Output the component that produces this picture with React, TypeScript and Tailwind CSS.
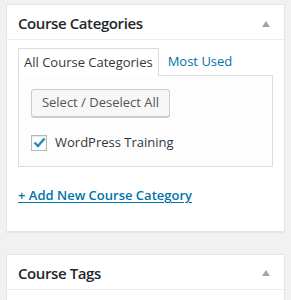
export default function App() {
    return (
        <div
            className="h-[300px] w-[291px] overflow-hidden bg-[#f1f1f1] px-[6px] pt-[4px]"
            style={{ fontFamily: '"Open Sans", sans-serif' }}
        >
            {/* Course Categories box */}
            <div className="border border-[#e5e5e5] bg-white shadow-[0_1px_1px_rgba(0,0,0,0.04)]">
                <div className="flex h-[35px] items-center justify-between border-b border-[#eeeeee] pl-[11px] pr-[14px] pt-[3px]">
                    <span className="text-[15px] font-semibold tracking-[-0.4px] text-[#23282d]">Course Categories</span>
                    <span className="h-0 w-0 border-x-[4px] border-b-[6px] border-x-transparent border-b-[#a0a5aa]" />
                </div>
                <div className="px-[11px] pt-[8px] pb-[25px]">
                    {/* Tabs */}
                    <div className="flex items-end">
                        <div className="relative -mb-px flex h-[28px] items-center border border-b-0 border-[#dddddd] bg-white px-[5px] text-[13px] text-[#32373c]">
                            All Course Categories
                        </div>
                        <span className="flex h-[27px] items-center px-[9px] text-[13px] text-[#0073aa]">Most Used</span>
                    </div>
                    <div className="h-[92px] border border-[#dddddd] bg-[#fdfdfd] pl-[12px] pt-[13px]">
                        <button className="flex h-[28px] w-[139px] items-center justify-center rounded-[3px] border border-[#cccccc] bg-[#f7f7f7] text-[13px] text-[#555555] shadow-[0_1px_0_#cccccc]">
                            Select / Deselect All
                        </button>
                        <label className="mt-[16px] flex items-center gap-[8px] text-[13px] text-[#32373c]">
                            <span className="flex h-[16px] w-[16px] items-center justify-center border border-[#b4b9be] bg-white shadow-[inset_0_1px_2px_rgba(0,0,0,0.1)]">
                                <svg width="13" height="11" viewBox="0 0 13 11">
                                    <path d="M1.5 5.5 L5 9 L11.5 1.5" fill="none" stroke="#1e8cbe" strokeWidth="2.4" />
                                </svg>
                            </span>
                            WordPress Training
                        </label>
                    </div>
                    <a className="mt-[19px] block text-[13px] font-semibold text-[#0073aa] underline underline-offset-2">
                        + Add New Course Category
                    </a>
                </div>
            </div>

            {/* Course Tags box */}
            <div className="mt-[22px] border border-[#e5e5e5] bg-white shadow-[0_1px_1px_rgba(0,0,0,0.04)]">
                <div className="flex h-[35px] items-center justify-between border-b border-[#eeeeee] pl-[11px] pr-[14px] pt-[3px]">
                    <span className="text-[15px] font-semibold tracking-[-0.4px] text-[#23282d]">Course Tags</span>
                    <span className="h-0 w-0 border-x-[4px] border-b-[6px] border-x-transparent border-b-[#a0a5aa]" />
                </div>
                <div className="h-[40px]" />
            </div>
        </div>
    );
}
